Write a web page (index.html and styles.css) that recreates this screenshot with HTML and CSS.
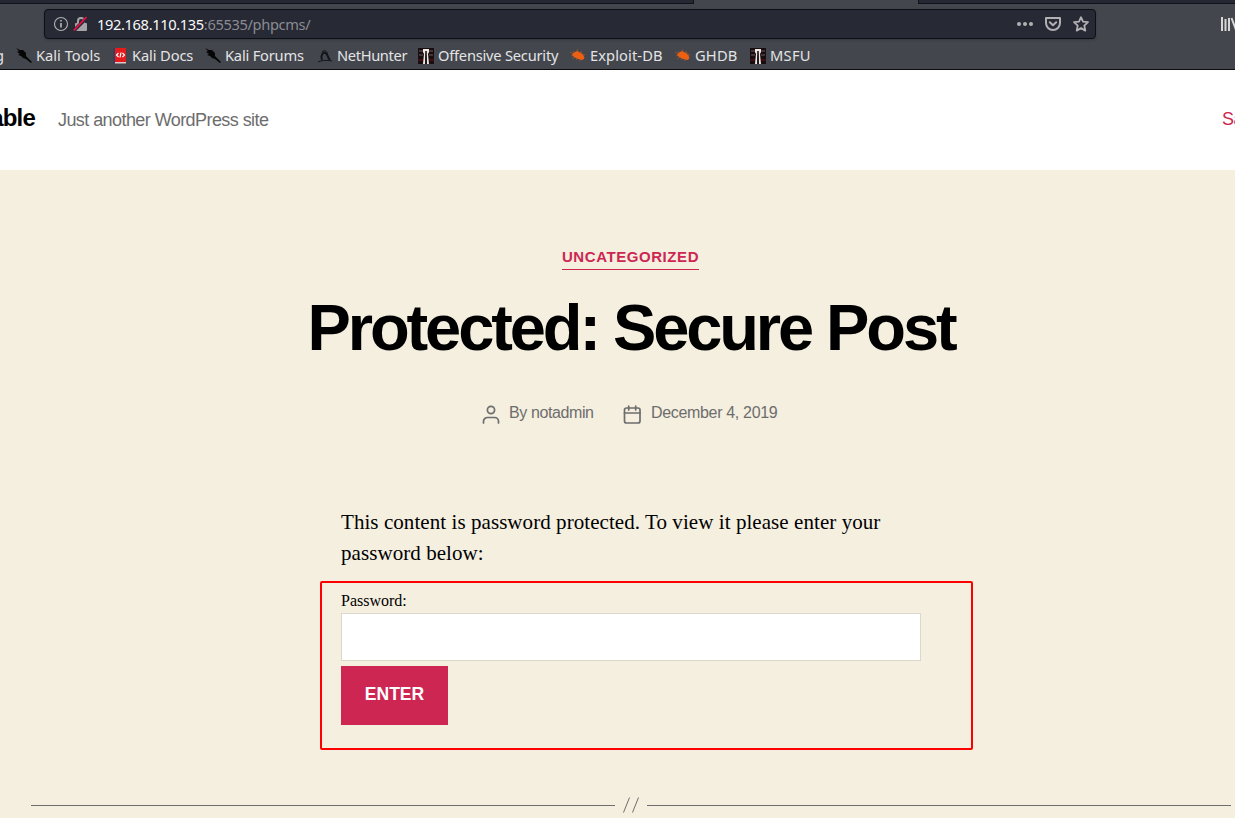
FILE: index.html
```
<!DOCTYPE html>
<html lang="en">
<head>
<meta charset="utf-8">
<title>Protected: Secure Post</title>
<link rel="stylesheet" href="styles.css">
</head>
<body>
<svg class="defs" width="0" height="0">
  <symbol id="kali" viewBox="0 0 16 16"><path d="M0 0l4 2 3 0 3 3 0 3 6 6-1 1-5-4-3-1-2-2-3-1 2-1-3-2 2-1z" fill="#050506"/></symbol>
  <symbol id="bug" viewBox="0 0 16 16"><path d="M3 5l2-1 2-1 4 2 3 3 0 3-2 1-4-1-4-2-2-2z" fill="#ee6011"/><path d="M0 4l4 2M3 3l2 2M7 1l1 3M11 3l1 3M12 6l3 1M13 9l2 1M3 7L1 8M5 9l-3 2M7 10l-1 2M10 11v2" stroke="#ac572c" stroke-width=".7"/></symbol>
  <symbol id="offsec" viewBox="0 0 16 16"><path fill="#190d10" d="M0 0h16v16H0z"/><path d="M1 3h4M11 3h4M1 7h4M11 7h4" stroke="#514145" stroke-width="1.5"/><path d="M0 12h5M11 12h5" stroke="#3b1115" stroke-width="2"/><path d="M5 1h6v3l-1 2 1 10H9L8.500 3h-1L7 16H5L6 6 5 4z" fill="#eee9e5"/><path d="M7.500 3h1l.5 13H7z" fill="#201518"/></symbol>
</svg>
<header class="browser">
  <div class="tabs"><div class="tab tab-left"></div><div class="tab-active"></div><div class="tab tab-right"></div></div>
  <div class="toolbar">
    <div class="address">
      <svg width="16" height="16" viewBox="0 0 16 16" fill="none" stroke="#b1b1b3"><circle cx="8" cy="8" r="6.500" stroke-width="1.100"/><path d="M8 7v4.500M8 4v1.600" stroke-width="1.700"/></svg>
      <svg class="lock" width="16" height="16" viewBox="0 0 16 16"><path d="M5 8V5a3 3 0 0 1 6 0v3" fill="none" stroke="#a5a5a9" stroke-width="2"/><rect x="2" y="7" width="12" height="8" rx="1" fill="#a5a5a9"/><path d="M1 14.500L14 1.500" stroke="#272935" stroke-width="3.500"/><path d="M.8 14.500L13.500 1" stroke="#f50d43" stroke-width="1.800"/></svg>
      <span class="url">192.168.110.135<span>:65535/phpcms/</span></span>
      <div class="actions">
        <svg width="16" height="16" fill="#b1b1b3"><circle cx="2" cy="8" r="2"/><circle cx="8" cy="8" r="2"/><circle cx="14" cy="8" r="2"/></svg>
        <svg width="16" height="16" fill="none" stroke="#b1b1b3" stroke-width="2" stroke-linejoin="round" stroke-linecap="round"><path d="M1 2h14v5a7 7 0 0 1-14 0z"/><path d="M4.800 6.300L8 9.300l3.200-3"/></svg>
        <svg width="16" height="16" fill="none" stroke="#b1b1b3" stroke-width="1.800" stroke-linejoin="round"><path d="M8 1.200l2 4.500 5 .5-3.700 3.400 1 5L8 12.100l-4.300 2.500 1-5L1 6.200l5-.5z"/></svg>
      </div>
    </div>
    <svg class="library" width="16" height="16" fill="none" stroke="#d5d5d5" stroke-width="2"><path d="M1 1v14M4.500 3v12M8 2v13M10.500 2l5 13"/></svg>
  </div>
  <nav class="bookmarks">
    <span class="bm b0">g</span>
    <span class="bm b1"><svg><use href="#kali"/></svg>Kali Tools</span>
    <span class="bm b2"><svg viewBox="0 0 16 16"><path fill="#2b3e69" d="M1.500 0H4v15H1.500z"/><path fill="#e51b1b" d="M3 0h11v14H3z"/><path fill="#d9c9ca" d="M3 14h11v1.500H3z"/><path d="M6.500 5L4.500 7l2 2M10.500 5l2 2-2 2M9 4.500L8 9.500" fill="none" stroke="#fff" stroke-width="1.200"/></svg>Kali Docs</span>
    <span class="bm b3"><svg><use href="#kali"/></svg>Kali Forums</span>
    <span class="bm b4"><svg viewBox="0 0 16 16" fill="none" stroke="#141518"><path d="M5 12C3 8 6 4 8 5c3 0 2 4 5 7" stroke-width="2"/><path d="M5 4c3-3 6 0 5 3M1 14c4-2 9-2 14-1" stroke-width="1"/></svg>NetHunter</span>
    <span class="bm b5"><svg><use href="#offsec"/></svg>Offensive Security</span>
    <span class="bm b6"><svg><use href="#bug"/></svg>Exploit-DB</span>
    <span class="bm b7"><svg><use href="#bug"/></svg>GHDB</span>
    <span class="bm b8"><svg><use href="#offsec"/></svg>MSFU</span>
  </nav>
</header>
<div class="site-header"><div class="brand"><b>able</b></div><span class="tagline">Just another WordPress site</span><a class="sample">Sa</a></div>
<main>
  <div class="category"><a>UNCATEGORIZED</a></div>
  <h1><span>Protected: Secure Post</span></h1>
  <div class="meta">
    <svg width="18" height="20" viewBox="0 0 18 20" fill="none" stroke="#6d6d6d" stroke-width="1.700" stroke-linecap="round"><circle cx="9" cy="5" r="3.600"/><path d="M1.500 18v-1.500a4 4 0 0 1 4-4h7a4 4 0 0 1 4 4V18"/></svg>
    <span class="author">By notadmin</span>
    <svg width="18" height="20" viewBox="0 0 18 20" fill="none" stroke="#6d6d6d" stroke-width="1.700" stroke-linecap="round"><rect x="1.500" y="3" width="15.500" height="15" rx="2"/><path d="M1.500 8H17M5.700 1v4M12.700 1v4"/></svg>
    <span class="date">December 4, 2019</span>
  </div>
  <p class="message"><span class="l1">This content is password protected. To view it please enter your</span><br><span class="l2">password below:</span></p>
  <form class="password-form"><label for="pw">Password:</label><input id="pw" type="password"><button type="button">ENTER</button></form>
  <div class="separator"><i></i><svg width="16" height="16" fill="none" stroke="#6d6d6d"><path d="M.5 15.500L6.500.5M9.500 15.500L15.500.5"/></svg><i></i></div>
</main>
</body>
</html>
```
FILE: styles.css
```
* { box-sizing: border-box; }
body { margin: 0; width: 1235px; height: 818px; overflow: hidden; background: #f5efe0; font-family: "Liberation Sans", sans-serif; }
.defs { display: none; }
.browser { height: 70px; background: #43464d; border-bottom: 1px solid #0c0c0d; font-family: "Noto Sans", sans-serif; }
.tabs { display: flex; height: 4px; }
.tab { background: #252733; border-bottom: 1px solid #10121a; }
.tab-left { width: 694px; border-right: 1px solid #10121a; }
.tab-active { width: 224px; }
.tab-right { flex: 1; border-left: 1px solid #10121a; }
.toolbar { display: flex; height: 36px; padding: 5px 0 0 44px; }
.address { display: flex; align-items: center; flex: none; width: 1052px; height: 30px; padding: 0 6px 0 8px; background: #272935; border: 1px solid #0d0f16; border-radius: 4px; box-shadow: 0 1px 3px #0003; }
.lock { margin-left: 4px; }
.url { margin-left: 8px; font-size: 14.67px; color: #f9f9fa; white-space: nowrap; letter-spacing: -.37px; }
.url span { color: #8b8c92; }
.actions { display: flex; gap: 12px; margin-left: auto; }
.library { margin: 7px 0 0 125px; flex: none; }
.bookmarks { display: flex; height: 29px; font-size: 14.67px; line-height: 31px; color: #e4e4e5; }
.bm { display: flex; align-items: center; gap: 4px; flex: none; height: 31px; white-space: nowrap; }
.bm svg { width: 16px; height: 16px; flex: none; }
.b0 { width: 16px; text-indent: -5px; }
.b1 { width: 96px; }
.b2 { width: 93px; letter-spacing: -.12px; }
.b3 { width: 112px; letter-spacing: -.2px; }
.b4 { width: 101px; letter-spacing: -.35px; }
.b5 { width: 152px; letter-spacing: -.22px; }
.b6 { width: 105px; letter-spacing: .1px; }
.b7 { width: 75px; letter-spacing: .2px; }
.b8 { letter-spacing: .3px; }
.site-header { display: flex; align-items: baseline; height: 100px; padding-top: 34px; background: #fff; white-space: nowrap; }
.brand { display: flex; justify-content: flex-end; width: 35px; margin-right: 23px; font-size: 24px; letter-spacing: -.8px; }
.tagline { color: #6d6d6d; font-size: 18px; letter-spacing: -.57px; }
.sample { margin-left: auto; width: 13px; color: #cd2653; font-size: 18px; line-height: 20px; letter-spacing: -.5px; position: relative; top: -1px; }
.category { display: flex; justify-content: center; padding: 77px 0 0 26px; }
.category a { height: 23px; color: #cd2653; border-bottom: 1px solid; font-size: 15px; font-weight: 700; line-height: 20px; letter-spacing: .57px; }
h1 { display: flex; justify-content: center; height: 74px; margin: 22px 0 0; padding-left: 27px; font-size: 65px; line-height: 72px; letter-spacing: -3.1px; white-space: nowrap; }
.meta { display: flex; align-items: center; height: 22px; margin-top: 37px; padding-left: 482px; color: #6d6d6d; font-size: 16px; white-space: nowrap; }
.meta svg { position: relative; top: 1px; flex: none; }
.author { width: 114px; margin-left: 9px; letter-spacing: -.4px; line-height: 18px; margin-bottom: 3px; }
.date { margin-left: 10px; letter-spacing: -.33px; line-height: 18px; margin-bottom: 3px; }
.message { height: 62px; margin: 82px 0 0 341px; font: 21px/31px "Liberation Serif", serif; letter-spacing: .065px; white-space: nowrap; }
.password-form { display: flex; flex-direction: column; align-items: flex-start; width: 653px; height: 169px; margin: 12px 0 0 320px; padding: 9px 19px; border: 2px solid #f00; border-radius: 2px; }
label { height: 21px; font: 16px/18px "Liberation Serif", serif; }
input { width: 580px; height: 48px; flex: none; border: 1px solid #dcd7ca; background: #fff; }
button { width: 107px; height: 59px; margin-top: 5px; padding: 0 0 3px; flex: none; border: 0; background: #cd2653; color: #fff; font: 700 17.5px "Liberation Sans", sans-serif; letter-spacing: 0; }
.separator { display: flex; align-items: center; gap: 8px; height: 16px; margin: 47px 4px 0 31px; }
.separator i { flex: 1; height: 1px; background: #6d6d6d; }
```
